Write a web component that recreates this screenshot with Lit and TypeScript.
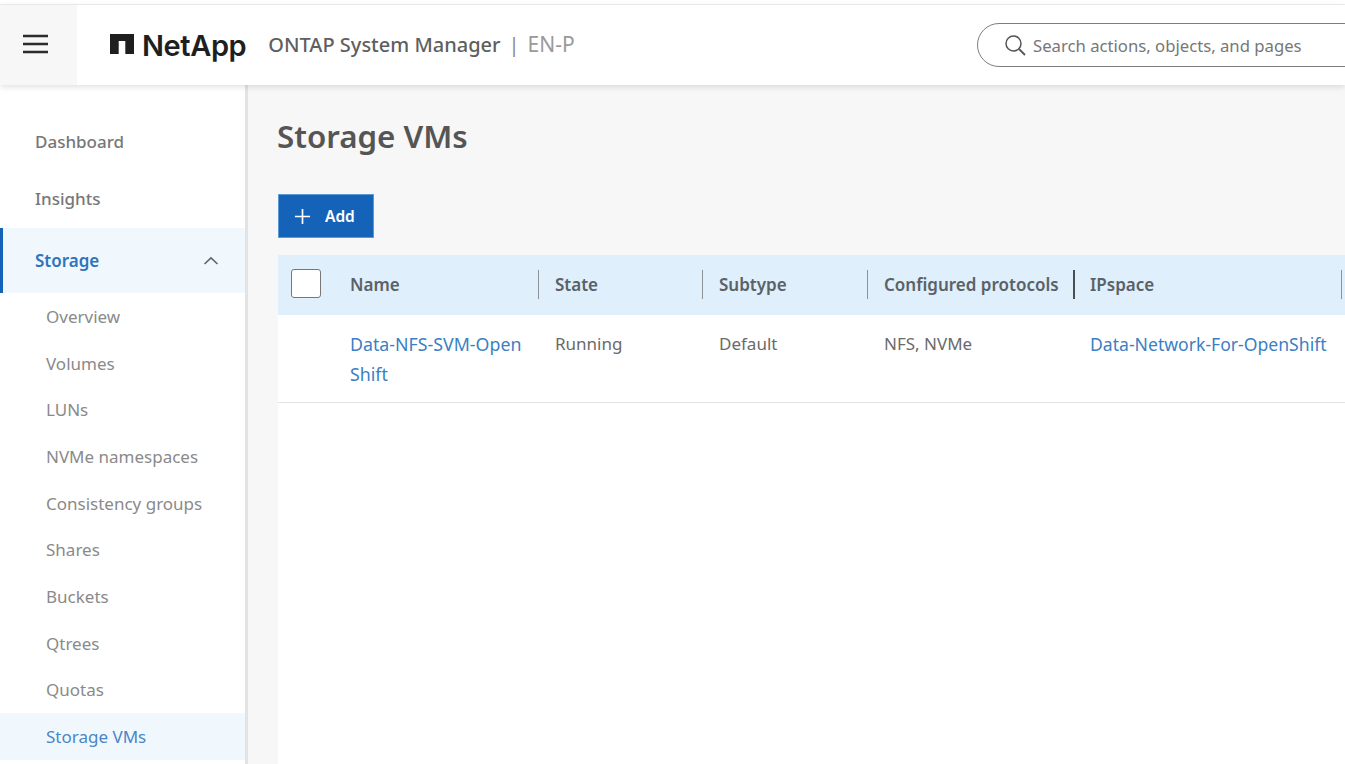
import { LitElement, css, html } from 'lit'
import { customElement } from 'lit/decorators.js'

const topNav = ['Dashboard', 'Insights']
const storageNav = ['Overview', 'Volumes', 'LUNs', 'NVMe namespaces', 'Consistency groups', 'Shares', 'Buckets', 'Qtrees', 'Quotas']

@customElement('app-root')
export class AppRoot extends LitElement {
	render() {
		return html`
			<div class="top-strip"></div>
			<header class="header">
				<div class="burger">
					<svg width="26" height="20" viewBox="0 0 26 20"><path d="M0 2h25M0 10h25M0 18h25" stroke="#2b2b2b" stroke-width="2.4" fill="none"/></svg>
				</div>
				<div class="logo">
					<svg width="24" height="20" viewBox="0 0 24 20"><path d="M0 0h24v20h-8.7V7H8.7v13H0z" fill="#1f1f1f"/></svg>
					<span>NetApp</span>
				</div>
				<div class="product">ONTAP System Manager</div>
				<div class="pipe">|</div>
				<div class="cluster">EN-P</div>
				<div class="search">
					<svg width="24" height="24" viewBox="0 0 24 24"><circle cx="10.5" cy="10.5" r="7.5" stroke="#555" stroke-width="1.5" fill="none"/><path d="M16 16l6 6" stroke="#555" stroke-width="1.8" fill="none"/></svg>
					<span>Search actions, objects, and pages</span>
				</div>
			</header>
			<div class="body">
				<nav class="side">
					<div class="top-items">
						${topNav.map(n => html`<div class="nav-item">${n}</div>`)}
					</div>
					<div class="storage">
						<span>Storage</span>
						<svg width="16" height="10" viewBox="0 0 16 10"><path d="M1.5 8L8 2l6.5 6" stroke="#666" stroke-width="1.7" fill="none"/></svg>
					</div>
					<div class="sub-items">
						${storageNav.map(n => html`<div class="sub-item">${n}</div>`)}
						<div class="sub-item active">Storage VMs</div>
					</div>
				</nav>
				<main class="main">
					<h1>Storage VMs</h1>
					<button class="add">
						<svg width="17" height="17" viewBox="0 0 18 18"><path d="M9 1v16M1 9h16" stroke="#fff" stroke-width="1.8" fill="none"/></svg>
						<span>Add</span>
					</button>
					<div class="table">
						<div class="thead">
							<div class="check"><div class="box"></div></div>
							<div class="th">Name</div>
							<div class="th sep">State</div>
							<div class="th sep">Subtype</div>
							<div class="th sep">Configured protocols</div>
							<div class="th sep dark">IPspace</div>
							<div class="th sep"></div>
						</div>
						<div class="tbody">
							<div></div>
							<div class="td link name">Data-NFS-SVM-Open<br>Shift</div>
							<div class="td">Running</div>
							<div class="td">Default</div>
							<div class="td">NFS, NVMe</div>
							<div class="td link">Data-Network-For-OpenShift</div>
							<div></div>
						</div>
					</div>
				</main>
			</div>
		`
	}

	static styles = css`
		:host {
			display: block;
			width: 1345px;
			height: 764px;
			overflow: hidden;
			background: #fff;
			font-family: 'Noto Sans', 'Open Sans', sans-serif;
			font-size: 17px;
			color: #5c5c5c;
		}

		.top-strip {
			height: 4px;
			background: #fff;
			border-bottom: 1px solid #eeeeee;
		}

		.header {
			position: relative;
			z-index: 2;
			height: 80px;
			display: flex;
			align-items: center;
			background: #fff;
			box-shadow: 0 2px 6px rgba(0, 0, 0, .12);
			white-space: nowrap;
		}

		.burger {
			width: 77px;
			height: 80px;
			flex: none;
			background: #f7f7f7;
			display: flex;
			align-items: center;
			padding: 0 0 2px 23px;
			box-sizing: border-box;
		}

		.logo {
			display: flex;
			align-items: center;
			gap: 8px;
			margin-left: 33px;
			color: #1f1f1f;
			font-family: 'Inter', 'Liberation Sans', sans-serif;
			font-size: 29px;
			font-weight: 600;
			letter-spacing: -.4px;
		}

		.logo svg {
			margin-top: -3px;
		}

		.product {
			margin: -2px 0 0 22px;
			font-size: 20px;
			font-weight: 500;
			color: #5f5f5f;
		}

		.pipe {
			margin: -2px 0 0 8px;
			font-size: 20px;
			color: #8a8a8a;
		}

		.cluster {
			margin: -2px 0 0 8px;
			font-size: 21px;
			color: #9a9a9a;
		}

		.search {
			position: absolute;
			left: 977px;
			top: 18px;
			width: 420px;
			height: 44px;
			box-sizing: border-box;
			border: 1.5px solid #7d7d7d;
			border-radius: 22px;
			display: flex;
			align-items: center;
			gap: 6px;
			padding-left: 25px;
			font-size: 16.7px;
			color: #777;
			background: #fff;
		}

		.body {
			display: flex;
			height: 680px;
		}

		.side {
			width: 245px;
			flex: none;
			box-sizing: border-box;
			padding-top: 28px;
			background: #fff;
		}

		.nav-item {
			height: 57px;
			padding-left: 35px;
			display: flex;
			align-items: center;
			font-weight: 500;
			color: #777;
		}

		.top-items {
			margin-bottom: 1px;
		}

		.storage {
			height: 65px;
			box-sizing: border-box;
			padding: 0 26px 0 32px;
			border-left: 3px solid #1563b8;
			background: #f1f8fd;
			display: flex;
			align-items: center;
			justify-content: space-between;
			font-weight: 600;
			color: #2d74bd;
		}

		.sub-item {
			height: 46.7px;
			padding-left: 46px;
			display: flex;
			align-items: center;
			color: #8a8a8a;
		}

		.sub-item.active {
			color: #4a86c6;
			background: #f1f8fd;
		}

		.main {
			flex: 1;
			min-width: 0;
			box-sizing: border-box;
			border-left: 3px solid #e3e3e3;
			background: #f7f7f7;
			padding: 28px 0 0 29px;
			display: flex;
			flex-direction: column;
			align-items: flex-start;
		}

		h1 {
			margin: 0;
			font-size: 31.3px;
			line-height: 46px;
			font-weight: 600;
			color: #555;
		}

		.add {
			margin: 35px 0 0 1px;
			width: 96px;
			height: 44px;
			box-sizing: border-box;
			border: 1px solid #5d9bd8;
			background: #1563b8;
			color: #fff;
			display: flex;
			align-items: center;
			gap: 14px;
			padding: 0 0 0 15px;
			font: 600 15.5px 'Noto Sans', sans-serif;
		}

		.table {
			margin: 17px -4px 0 1px;
			align-self: stretch;
			flex: 1;
			background: #fff;
		}

		.thead,
		.tbody {
			display: grid;
			grid-template-columns: 72px 188px 164px 165px 206px 268px 1fr;
		}

		.thead {
			height: 60px;
			box-sizing: border-box;
			padding-bottom: 2px;
			align-items: center;
			background: #dfeffb;
		}

		.check {
			padding-left: 13px;
		}

		.box {
			width: 30px;
			height: 29px;
			margin-top: -2px;
			box-sizing: border-box;
			background: #fff;
			border: 1.5px solid #777;
			border-radius: 3px;
		}

		.th {
			height: 29px;
			display: flex;
			align-items: center;
			font-weight: 600;
			color: #5a6167;
			white-space: nowrap;
		}

		.th.sep {
			border-left: 1.5px solid #8c9297;
			padding-left: 16px;
		}

		.th.dark {
			border-left: 2px solid #4a4f53;
			padding-left: 15px;
		}

		.tbody {
			height: 87px;
			border-bottom: 1px solid #e2e2e2;
		}

		.td {
			padding: 14px 0 0 17px;
			line-height: 30px;
			color: #6a6a6a;
			white-space: nowrap;
		}

		.td.name {
			padding-left: 0;
			font-size: 17.8px;
		}

		.link {
			color: #3b7fc4;
			font-size: 17.6px;
		}
	`
}
